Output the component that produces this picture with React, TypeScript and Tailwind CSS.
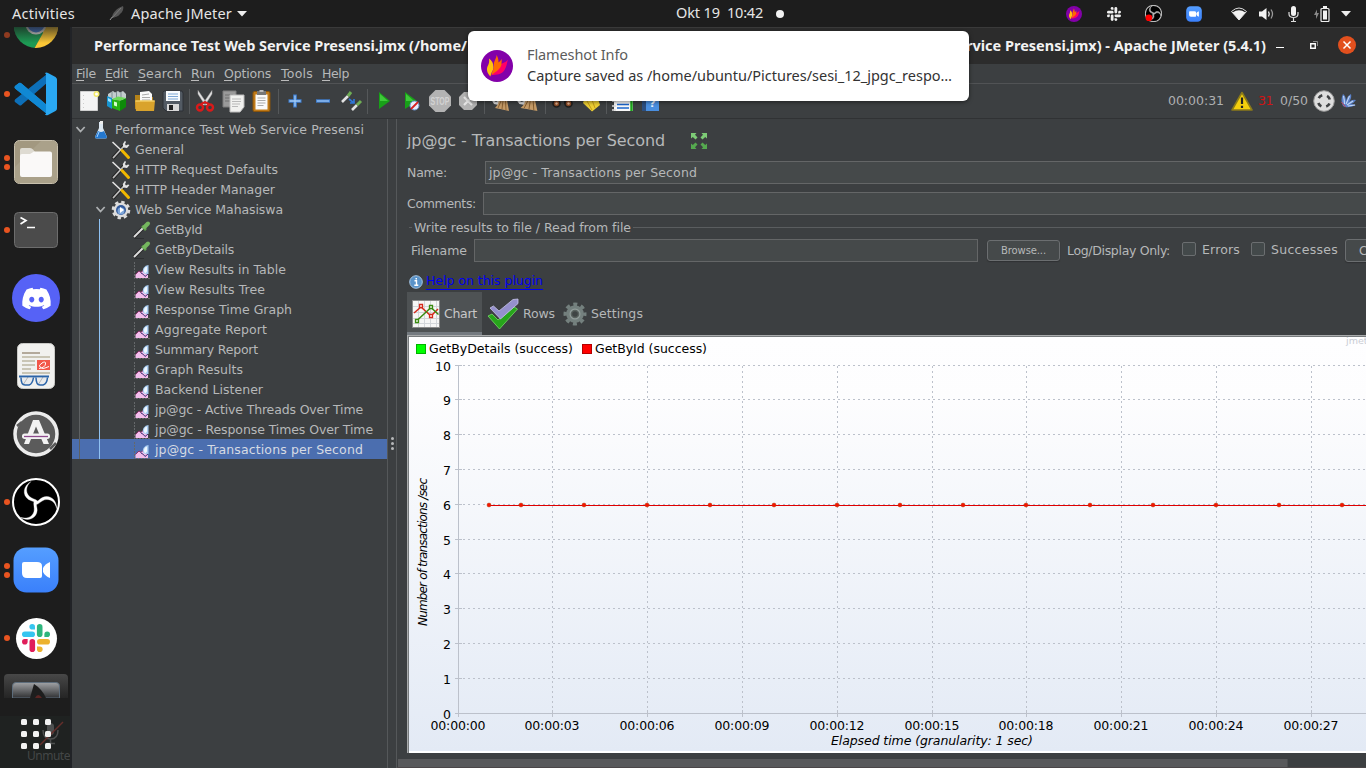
import React, { useLayoutEffect, useRef, useState } from "react";
import { FaDiscord } from "react-icons/fa";

/** Text whose letter spacing is adjusted so that it fills a given width. */
function Fit({ w, children, className = "" }: { w: number; children: string; className?: string }) {
  const ref = useRef<HTMLSpanElement>(null);
  const [ls, setLs] = useState(0);
  useLayoutEffect(() => {
    if (ref.current) setLs((w - ref.current.getBoundingClientRect().width) / children.length);
  }, [w, children]);
  return (
    <span ref={ref} className={"inline-block shrink-0 self-auto whitespace-pre " + className} style={{ letterSpacing: ls }}>
      {children}
    </span>
  );
}

const UI = "font-['Noto_Sans',sans-serif]";

/* ---------- shared glyphs ---------- */

const Flame = ({ size }: { size: number }) => (
  <svg width={size} height={size} viewBox="0 0 32 32" className="shrink-0">
    <circle cx="16" cy="16" r="16" fill="#8300a9" />
    <path d="M11 25C15 25 21 24.500 23.500 20 26 16 25.500 14 27 9.500 24 13.500 21 12.500 19 15 16 18 13 19 11 25z" fill="#ff0066" />
    <path d="M10.500 25.500C13 22 20 20 20.500 14c0-2 .5-3 0-5-1 2-2 2.500-3 3.500C17.500 9 17 7.500 15.500 5c0 4-3 6-2.500 10 .3 4-2 6-2.500 10.500z" fill="#ff6a00" />
    <path d="M9.500 26.500C6 23 5 19 7 15.500c1-2 1.500-4 1-7 3 2 4.500 5 4.500 8.500C12.500 21 10 22 9.500 26.500z" fill="#ffc20e" />
  </svg>
);

const Obs = ({ size, rec }: { size: number; rec?: boolean }) => (
  <svg width={size} height={size} viewBox="0 0 48 48" className="shrink-0">
    <circle cx="24" cy="24" r="23" fill="#000" stroke={rec ? "#bbb" : "#fff"} strokeWidth={rec ? 3 : 2} />
    {[0, 120, 240].map((a) => (
      <path
        key={a}
        transform={`rotate(${a} 24 24.5)`}
        d="M19 3.500C11 8 10 17 16.500 21.500c3 1.800 5.500 1.500 7.500 4l1.500-2.500c-2-2-5-2-8-4.500C13 14 14 8 19 3.500z"
        fill={rec ? "#bbb" : "#fff"}
        stroke={rec ? "#bbb" : "#fff"}
        strokeWidth={rec ? 1.5 : 0.3}
      />
    ))}
    {rec && <circle cx="11" cy="36" r="9.500" fill="#f00" />}
  </svg>
);

const ZoomApp = ({ size }: { size: number }) => (
  <svg width={size} height={size} viewBox="0 0 46 46" className="shrink-0">
    <defs>
      <linearGradient id="zm" x1="0" y1="0" x2="0" y2="1">
        <stop offset="0" stopColor="#559eff" />
        <stop offset="1" stopColor="#3a80fb" />
      </linearGradient>
    </defs>
    <rect x=".5" y=".5" width="45" height="45" rx="13" fill="url(#zm)" />
    <path d="M9 17q0-2 2-2h13q5 0 5 4v10q0 2-2 2H14q-5 0-5-5z" fill="#fff" />
    <path d="M30 21q2-4 7-6v16q-5-2-7-6z" fill="#fff" />
  </svg>
);

const slackParts = [0, 90, 180, 270];
const Slack = ({ size, colors }: { size: number; colors: string[] }) => (
  <svg width={size} height={size} viewBox="0 0 28 28" className="shrink-0">
    {slackParts.map((a, i) => (
      <g key={a} transform={`rotate(${a} 14 14)`} fill={colors[i]}>
        <rect x="0" y="7.500" width="13" height="5.600" rx="2.800" />
        <path d="M13 5.600V2.800a2.800 2.800 0 1 0-2.800 2.800z" />
      </g>
    ))}
  </svg>
);

/* ---------- top bar ---------- */

function TopBar() {
  return (
    <header className={"flex h-[27px] shrink-0 items-center bg-[#1d1d1d] text-[14.500px] leading-[27px] text-[#e6e6e6] " + UI}>
      <div className="flex w-[676px] items-center pl-3">
        <Fit w={63}>Activities</Fit>
        <svg width="16" height="16" viewBox="0 0 16 16" className="ml-[34px]">
          <path d="M1 14 4 10" stroke="#999" />
          <path d="M3 12C3 7 8 2 14 0c1 2 0 6-3 8-2 3-5 3-8 4z" fill="#555" />
          <path d="M3 12 12 2" stroke="#8a8a8a" strokeWidth=".7" />
        </svg>
        <Fit w={101} className="ml-[6px]">Apache JMeter</Fit>
        <svg width="10" height="6" className="ml-[5px]"><path d="M0 0h10L5 5.500z" fill="#eee" /></svg>
      </div>
      <Fit w={44} className="-mt-[2px]">Okt 19</Fit>
      <Fit w={36} className="-mt-[2px] ml-[7px]">10:42</Fit>
      <i className="ml-[13px] size-[8px] rounded-full bg-[#f2f2f2]" />
      <div className="ml-auto flex items-center pr-[15px]">
        <Flame size={16} />
        <span className="ml-[25px] flex"><Slack size={14} colors={["#eee", "#eee", "#eee", "#eee"]} /></span>
        <span className="ml-[24px] flex"><Obs size={17} rec /></span>
        <span className="ml-[24px] flex"><ZoomApp size={16} /></span>
        <svg width="16" height="14" viewBox="0 0 16 14" className="ml-[29px]">
          <path d="M8 13 .5 4.500Q8-2.500 15.500 4.500z" fill="none" stroke="#ddd" strokeWidth="1" />
          <path d="M8 13 1.500 5.500Q8 1 14.500 5.500z" fill="#f2f2f2" />
        </svg>
        <svg width="15" height="14" viewBox="0 0 15 14" className="ml-[12px]">
          <path d="M0 4.500h3L7.500 1v12L3 9.500H0z" fill="#f2f2f2" />
          <path d="M9.500 4.500q1.500 2.500 0 5" stroke="#f2f2f2" strokeWidth="1.300" fill="none" />
          <path d="M12 2.500q3 4.500 0 9" stroke="#999" strokeWidth="1.300" fill="none" />
        </svg>
        <svg width="11" height="16" viewBox="0 0 11 16" className="ml-[14px]">
          <rect x="3" y="0" width="5" height="10" rx="2.500" fill="#f2f2f2" />
          <path d="M1 6v2q0 3.500 4.500 3.500T10 8V6M5.500 12v3M3 15.500h5" stroke="#ddd" strokeWidth="1.200" fill="none" />
        </svg>
        <svg width="16" height="16" viewBox="0 0 16 16" className="ml-[15px]">
          <path d="M3 3.500 0 9h2v4l3-6H3z" fill="#888" />
          <rect x="7" y="2.500" width="8" height="13" rx="1" fill="none" stroke="#eee" strokeWidth="1.200" />
          <path d="M9 0h4v2H9zM9 4.500h4v9H9z" fill="#f2f2f2" />
        </svg>
        <svg width="10" height="6" className="ml-[11px]"><path d="M0 0h10L5 5.500z" fill="#eee" /></svg>
      </div>
    </header>
  );
}

/* ---------- dock ---------- */

function DockItem({ dots = 0, children }: { dots?: number; children: React.ReactNode }) {
  return (
    <div className="flex h-[68px] shrink-0 items-center">
      <div className="ml-[4px] flex w-[6px] flex-col gap-[3px]">
        {Array.from({ length: dots }, (_, i) => (
          <i key={i} className="size-[6px] rounded-full bg-[#e95420]" />
        ))}
      </div>
      <div className="flex w-[52px] justify-center">{children}</div>
    </div>
  );
}

function Dock() {
  return (
    <nav className="flex w-[72px] shrink-0 flex-col overflow-hidden border-r-2 border-[#212327] bg-[#1d1d1d]">
      <div className="flex h-[33px] shrink-0 items-start">
        <i className="ml-[4px] mt-[5px] size-[6px] rounded-full bg-[#8f3b20]" />
        <svg width="44" height="22" viewBox="0 26 44 22" className="ml-[4px]">
          <defs>
            <linearGradient id="fade" x1="0" y1="0" x2="0" y2="1">
              <stop offset="0" stopColor="#1d1d1d" stopOpacity=".7" />
              <stop offset="1" stopColor="#1d1d1d" stopOpacity="0" />
            </linearGradient>
            <clipPath id="cc"><circle cx="22" cy="25" r="22" /></clipPath>
          </defs>
          <g clipPath="url(#cc)">
            <path d="M0 20h24l8 8-12 20H0z" fill="#1d9a54" />
            <path d="M29 24h15v24H20l9-16z" fill="#fbc736" />
            <circle cx="22" cy="23" r="10.500" fill="#e6e6e6" />
            <circle cx="22" cy="23" r="8.500" fill="#4a7fd8" />
            <rect x="0" y="26" width="44" height="16" fill="url(#fade)" />
          </g>
        </svg>
      </div>
      <DockItem dots={1}>
        <svg width="44" height="44" viewBox="0 0 44 44">
          <path d="M1 14 5 11q1.500-.500 2.500.500L34 34l-1 8L1 16.500q-1-1.500 0-2.500z" fill="#1088d4" />
          <path d="M1 30 5 33q1.500 1 2.500 0L34 10l-1-8L1 27.500q-1 1.500 0 2.500z" fill="#0d6fb8" />
          <path d="M1 14 5 11q1.500-.500 2.500.500L34 34l-1 8L1 16.500q-1-1.500 0-2.500z" fill="#1088d4" />
          <path d="M31 1q1.500-1 3 0l7.500 4q1.500 1 1.500 2.500v29q0 1.500-1.500 2.500L34 43q-2 .8-3-.5l1-1V2.500z" fill="#2aa8f2" />
        </svg>
      </DockItem>
      <DockItem dots={2}>
        <svg width="44" height="44" viewBox="0 0 44 44">
          <rect x=".5" y=".5" width="43" height="43" rx="5" fill="#a29880" stroke="#c8c0ad" />
          <path d="M1 27 27 1h12q4 0 4 4v34q0 4-4 4H5q-4 0-4-4z" fill="#aaa18a" />
          <path d="M6 12V10q0-2 2-2h8q2 0 3 1.500l2 2.500h16v10H6z" fill="#dedbd2" />
          <path d="M6 16q0-2 2-2h8l4-2.500h16q2 0 2 2V35q0 2-2 2H8q-2 0-2-2z" fill="#faf9f8" />
        </svg>
      </DockItem>
      <DockItem dots={1}>
        <svg width="44" height="36" viewBox="0 0 44 36">
          <rect x=".5" y=".5" width="43" height="35" rx="4" fill="#4b4b4b" stroke="#6d6d6d" />
          <path d="M6.500 5.500 12 8.500 6.500 12M13 15.500h8" stroke="#fff" strokeWidth="1.700" fill="none" />
        </svg>
      </DockItem>
      <DockItem>
        <div className="flex size-12 shrink-0 items-center justify-center rounded-full bg-[#5662f6] text-white">
          <FaDiscord size={31} />
        </div>
      </DockItem>
      <DockItem>
        <svg width="38" height="46" viewBox="0 0 38 46">
          <rect x=".5" y=".5" width="37" height="45" rx="5" fill="#f1f1ef" stroke="#c9c9c6" />
          <path d="M5 10h18" stroke="#b3a99b" strokeWidth="2" />
          <path d="M5 14h28M5 18h13M5 22h13M5 26h9M5 30h28" stroke="#c9c5b5" strokeWidth="2" />
          <rect x="20" y="17" width="13" height="10" fill="#f25749" />
          <path d="M22 25.500q6-1 6.500-4.500T25 20t-2 4 3 1.500 6-2" stroke="#fff" fill="none" />
          <path d="M6 42 11 34M21 42l5-8" stroke="#888" />
          <path d="M2 33.500h30" stroke="#2b64a8" strokeWidth="2" />
          <path d="M4 34.500q0 7.500 4 7.500h4q3.500-1 4.500-7.500M19 34.500q0 7.500 4 7.500h3q4-1 4.500-7.500" fill="#dfe4ea" fillOpacity=".5" stroke="#2b64a8" strokeWidth="1.500" />
        </svg>
      </DockItem>
      <DockItem>
        <svg width="46" height="46" viewBox="0 0 46 46">
          <circle cx="23" cy="23" r="21" fill="#5b5b5b" stroke="#ececec" strokeWidth="3.500" />
          <path d="m4 15 5-4M37 38l6-6" stroke="#5b5b5b" strokeWidth="2.500" />
          <path d="M20 9h6l10 24h-5.500L23 15.500 16 33h-5z" fill="#f2f2f2" />
          <rect x="9" y="22.500" width="28" height="5.500" rx="2.700" fill="#f2f2f2" />
          <path d="M11 25.500h24" stroke="#8d4a8c" strokeWidth="1.300" />
        </svg>
      </DockItem>
      <DockItem dots={1}><Obs size={48} /></DockItem>
      <DockItem dots={2}><ZoomApp size={46} /></DockItem>
      <DockItem dots={1}>
        <div className="flex size-[41px] shrink-0 items-center justify-center rounded-full bg-white">
          <Slack size={28} colors={["#36c5f0", "#2eb67d", "#ecb22e", "#e01e5a"]} />
        </div>
      </DockItem>
      <div className="ml-[4px] mt-[2px] flex h-[24px] w-[64px] shrink-0 items-end justify-center rounded-t bg-linear-to-b from-[#484848] to-[#252525]">
        <svg width="48" height="16" viewBox="0 0 48 16">
          <defs>
            <linearGradient id="jm" x1="0" y1="0" x2="0" y2="1">
              <stop offset="0" stopColor="#a0a2a5" />
              <stop offset="1" stopColor="#303133" />
            </linearGradient>
          </defs>
          <path d="M.5 16V4q0-3.500 3.500-3.500h40q3.500 0 3.500 3.500v12z" fill="url(#jm)" stroke="#5d6d7c" />
          <path d="M18 16 22 2q8 5 12 14z" fill="#1d1d1d" />
          <path d="M23 16q3-6 7 0z" fill="#5a2523" />
        </svg>
      </div>
      <div className="mt-[18px] flex h-[52px] flex-col items-start bg-[#1f2221]">
        <svg width="62" height="35" viewBox="0 0 62 35" className="ml-[8px] shrink-0">
          <rect x="39" y="7" width="7" height="12" rx="3.500" fill="#4d4f4f" />
          <path d="M35 14q0 9 7.500 9T50 14M42.500 23v4M39 27.500h8" stroke="#4d4f4f" strokeWidth="1.500" fill="none" />
          <path d="m32 29 23-23" stroke="#652e2b" strokeWidth="1.400" />
          {[13, 25, 37].map((x) => [3, 15, 27].map((y) => (
            <rect key={x + "-" + y} x={x} y={y} width="6" height="6" rx="1.500" fill="#f2f2f2" />
          )))}
        </svg>
        <Fit w={43} className={"-mt-[2px] ml-[27px] text-[12px] leading-[14px] text-[#444747] " + UI}>Unmute</Fit>
      </div>
    </nav>
  );
}

/* ---------- toolbar ---------- */

const Slot = ({ children }: { children: React.ReactNode }) => (
  <svg width="28" height="28" viewBox="0 0 28 28" className="shrink-0">{children}</svg>
);
const Sep = ({ className }: { className: string }) => (
  <div className={"flex shrink-0 justify-center " + className}><i className="h-[25px] w-px bg-[#55585a]" /></div>
);
const Broom = () => (
  <>
    <path d="m4 12 5 3 5-3-2 6-5-1z" fill="#d8d8d8" />
    <path d="M12 12l8 1 2 11-9-2-5-1q4-4 4-9z" fill="#c49a66" />
    <path d="m14 14-3 7M16 14l-1 8M18.500 14l.5 9" stroke="#7c5325" strokeWidth=".8" />
  </>
);

function Toolbar() {
  return (
    <div className="flex h-[35px] shrink-0 items-center border-b border-[#303234] pl-[3px]">
      <Slot>
        <path d="M5.500 4.500h17v19h-17z" fill="#f4f4f4" stroke="#cfcfcf" />
        <path d="M8.500 8v13" stroke="#ccc" strokeDasharray="1 3" />
        <circle cx="21.500" cy="7" r="3" fill="#f3ea6a" /><circle cx="21.500" cy="7" r="1.500" fill="#fff" />
      </Slot>
      <Slot>
        <path d="m5 7 5-3 2 1.500L15 4l2 1.500L20 4l3 3v6H5z" fill="#c3cccd" />
        <path d="M9 5v6M13.500 5v6M18 5v6" stroke="#7f8f91" />
        <path d="m4 9 5 2v11l-5-3z" fill="#1794cf" /><path d="m5 11 3 1.500v3L5 14z" fill="#9ee1ff" />
        <path d="m9 12 8 2v10l-8-3z" fill="#27b315" /><path d="m17 14 6-3v9l-6 4z" fill="#0d8a09" />
        <path d="m9 12 6-2.500 8 1.500-6 3z" fill="#6ddb58" /><path d="m11 14.500 3 1v4l-3-1z" fill="#d5ffd0" />
      </Slot>
      <Slot>
        <path d="M4 14V8h5l1 2h12v12H4z" fill="#b48218" />
        <path d="m9 5 9-1 3 3v10H9z" fill="#fafafa" /><path d="m11 8 7-1M11 10.500h8M11 13h8" stroke="#aaa" />
        <path d="M4 13.500h20L23 24H5z" fill="#d9a32c" /><path d="M4.500 14h19" stroke="#ffe27f" />
      </Slot>
      <Slot>
        <path d="M5 4h18l1 2v18H7l-3-3V5z" fill="#525a63" stroke="#2c3036" />
        <path d="M7 4h14v10H7z" fill="#f7fafc" /><path d="M9 7h10M9 9.500h10M9 12h10" stroke="#7ca7d6" />
        <path d="M8 17h12v7H8z" fill="#d8d8d8" /><path d="M10 18h4v5h-4z" fill="#222" />
      </Slot>
      <Sep className="w-[4px]" />
      <Slot>
        <path d="M7 3.500 17 18l-3 0L7 7zM21 3.500 11 18l3 0L21 7z" fill="#e2e2e2" stroke="#aaa" strokeWidth=".5" />
        <circle cx="9" cy="20.500" r="3" fill="none" stroke="#d91a1a" strokeWidth="2.400" />
        <circle cx="19" cy="20.500" r="3" fill="none" stroke="#d91a1a" strokeWidth="2.400" />
        <path d="m10 17 4-2 4 2" stroke="#d91a1a" strokeWidth="2" fill="none" />
      </Slot>
      <Slot>
        <path d="M4 4h13v16H4z" fill="#9a9a9a" stroke="#7d7d7d" /><path d="M6 8h8M6 11h5M6 14h5" stroke="#707070" />
        <path d="M11 8h14v12l-4 5H11z" fill="#f1f1ef" stroke="#bbb" /><path d="M13 12h9M13 14.500h9M13 17h8M13 19.500h6" stroke="#b9b9b9" />
      </Slot>
      <Slot>
        <rect x="6" y="4.500" width="17" height="20" rx="1.500" fill="#c07a18" stroke="#8a540b" />
        <path d="M8.500 7.500h12v15h-12z" fill="#fafafa" /><path d="M10.500 11h8M10.500 13.500h8M10.500 16h8M10.500 18.500h6" stroke="#aaa" />
        <path d="M10 4h9v4h-9z" fill="#777" /><path d="M12.500 3h4v2h-4z" fill="#bbb" />
      </Slot>
      <Sep className="w-[6px]" />
      <Slot><path d="M14 7.500v13M7.500 14h13" stroke="#3f7fd2" strokeWidth="3.600" /><path d="M14 8.500v11M8.500 14h11" stroke="#a3ccf6" strokeWidth="1.300" /></Slot>
      <Slot><path d="M7 14h14" stroke="#3f7fd2" strokeWidth="3.400" /><path d="M8 14h12" stroke="#a3ccf6" strokeWidth="1.200" /></Slot>
      <Slot>
        <path d="m5 15 6-6M15 23l5-5" stroke="#e2e2e2" strokeWidth="2.600" />
        <path d="m11 9 3-4M20 18l4-4" stroke="#6fae55" strokeWidth="3" />
        <path d="m12 12 5 4m0-4v4h-4" stroke="#2f76d8" strokeWidth="1.700" fill="none" />
      </Slot>
      <Sep className="w-[5px]" />
      <Slot><path d="m9 5 11 9L9 22z" fill="#18a018" /><path d="m10 7 8 7h-8z" fill="#3fc93a" /></Slot>
      <Slot>
        <path d="M7 5 19 14 7 22z" fill="#18a018" /><path d="m8 7 8 7H8z" fill="#3fc93a" />
        <circle cx="16.500" cy="18.500" r="4.500" fill="#e8eefb" stroke="#6b94d1" /><path d="m13 22 7-7" stroke="#d62222" strokeWidth="1.800" />
      </Slot>
      <Slot>
        <path d="M9.500 3h9L25 9.500v9L18.500 25h-9L3 18.500v-9z" fill="#b3b3b3" />
        <text x="14" y="17.500" textAnchor="middle" fontSize="10" fontWeight="bold" fill="#d2d2d2" fontFamily="Liberation Sans, sans-serif" textLength="19" lengthAdjust="spacingAndGlyphs">STOP</text>
      </Slot>
      <Slot>
        <path d="M10 5h8l5 5v8l-5 5h-8l-5-5v-8z" fill="#b3b3b3" />
        <path d="m10 10 8 8M18 10l-8 8" stroke="#e4e4e4" strokeWidth="2.200" />
      </Slot>
      <Sep className="w-[5px]" />
      <Slot><Broom /></Slot>
      <Slot><g transform="translate(-4 0) scale(1.2 1)"><Broom /></g></Slot>
      <Sep className="w-[5px]" />
      <Slot>
        <path d="M6 8h6v9H6zM16 8h6v9h-6z" fill="#232323" />
        <circle cx="8.500" cy="16.500" r="3.500" fill="#8a4a26" stroke="#1e1e1e" strokeWidth="1.600" />
        <circle cx="20.500" cy="16.500" r="3.500" fill="#8a4a26" stroke="#1e1e1e" strokeWidth="1.600" />
        <circle cx="8.500" cy="16.500" r="1.200" fill="#e0b090" /><circle cx="20.500" cy="16.500" r="1.200" fill="#e0b090" />
      </Slot>
      <Slot><path d="M9 10 22 12l2 6-8 6.500L7 16z" fill="#edcf33" /><path d="m11 14 5 9M16 13l3 8" stroke="#b78c13" strokeWidth=".8" /></Slot>
      <Sep className="w-[5px]" />
      <Slot>
        <path d="M5 6h19v18H5z" fill="#f8f8f8" /><path d="M22.500 6v18" stroke="#1ca51a" strokeWidth="2.500" />
        <path d="M8 12h12M8 17.500h12M8 21h12" stroke="#1b65cc" strokeWidth="1.700" /><path d="M3 14h4M3 19h4M3 23h4" stroke="#ddd" strokeWidth="1.500" />
      </Slot>
      <Slot>
        <path d="M5 6h4v18H5z" fill="#2c4f80" /><path d="M9 6h13v18H9z" fill="#4a8fe0" />
        <text x="15.500" y="20" textAnchor="middle" fontSize="11" fontWeight="bold" fill="#e6f1ff" fontFamily="DejaVu Sans, sans-serif">?</text>
      </Slot>
      <div className="ml-auto flex shrink-0 items-center pr-[8px]">
        <Fit w={56} className="text-[#aeb0b1]">00:00:31</Fit>
        <svg width="22" height="20" viewBox="0 0 22 20" className="ml-[7px]">
          <path d="M11 1.500 21 19H1z" fill="#f4cf0d" stroke="#8a7a1a" strokeWidth="1.600" strokeLinejoin="round" />
          <path d="M11 6.500v6.500M11 14.800v2.200" stroke="#222" strokeWidth="2.200" />
        </svg>
        <Fit w={15} className="ml-[5px] text-[#d01414]">31</Fit>
        <Fit w={28} className="ml-[7px] text-[#aeb0b1]">0/50</Fit>
        <svg width="22" height="22" viewBox="0 0 22 22" className="ml-[5px]">
          <circle cx="11" cy="11" r="10.300" fill="#dedede" stroke="#9a9a9a" />
          <circle cx="11" cy="11" r="6" fill="none" stroke="#3f4143" strokeWidth="2.600" strokeDasharray="4.400 5.025" strokeDashoffset="-2.500" />
        </svg>
        <svg width="18" height="16" viewBox="0 0 18 16" className="ml-[5px]">
          <path d="M3 13Q0 7 3 1q3 2 3 7 1-5 5-7 1 4-2 8 3-3 7-2-2 3-5 4 2 0 5 1-6 3-11 2z" fill="#5b82ca" />
          <path d="M3.500 3q1 4 1 8M9.500 3 6 11M13 8l-6 4M15 12l-7 1" stroke="#c4d8f4" strokeWidth="1.100" fill="none" />
          <path d="m1.500 9 4 5" stroke="#c1435a" />
        </svg>
      </div>
    </div>
  );
}

/* ---------- test plan tree ---------- */

type Kind = "flask" | "tools" | "gear" | "pipette" | "listener";
const rows: [number, Kind, string, number][] = [
  [0, "flask", "Performance Test Web Service Presensi", 249],
  [1, "tools", "General", 49],
  [1, "tools", "HTTP Request Defaults", 143],
  [1, "tools", "HTTP Header Manager", 140],
  [1, "gear", "Web Service Mahasiswa", 148],
  [2, "pipette", "GetById", 47],
  [2, "pipette", "GetByDetails", 79],
  [2, "listener", "View Results in Table", 131],
  [2, "listener", "View Results Tree", 110],
  [2, "listener", "Response Time Graph", 137],
  [2, "listener", "Aggregate Report", 112],
  [2, "listener", "Summary Report", 103],
  [2, "listener", "Graph Results", 88],
  [2, "listener", "Backend Listener", 108],
  [2, "listener", "jp@gc - Active Threads Over Time", 208],
  [2, "listener", "jp@gc - Response Times Over Time", 218],
  [2, "listener", "jp@gc - Transactions per Second", 208],
];

function TreeIcon({ kind }: { kind: Kind }) {
  return (
    <svg width="20" height="20" viewBox="0 0 20 20" className="shrink-0">
      {kind === "flask" && (
        <>
          <path d="M8 2h4v6l4 9q0 1.500-2 1.500H6q-2 0-2-1.500l4-9z" fill="#dbe7f1" />
          <path d="m7 11-3 6q0 1.500 2 1.500h8q2 0 2-1.500l-3-6q-3 2-6 0z" fill="#2478cf" />
          <path d="m8 12-2 5" stroke="#a8d4ff" /><path d="M9 1h3v3H9z" fill="#eee" />
        </>
      )}
      {kind === "tools" && (
        <>
          <path d="m2.500 17.500 10.500-11.500" stroke="#222" strokeWidth="3.600" strokeLinecap="round" />
          <path d="m2.500 17.500 10.500-11.500" stroke="#bcbcbc" strokeWidth="1.800" strokeLinecap="round" />
          <path d="M14 .8 11.800 4l.4 3.500 3.800.500L18.500 5 17 4.500l-2 1-1-1.500 1-2z" fill="#e2e2e2" />
          <path d="m1.500 2 9 8.500" stroke="#e6e6e6" strokeWidth="1.500" />
          <path d="m11 10.500 6.500 7" stroke="#f0b800" strokeWidth="3" strokeLinecap="round" />
        </>
      )}
      {kind === "gear" && (
        <>
          <circle cx="10" cy="10" r="7.800" fill="none" stroke="#dcdcdc" strokeWidth="3" strokeDasharray="3.300 2.826" />
          <circle cx="10" cy="10" r="7.300" fill="#dcdcdc" />
          <circle cx="10" cy="10" r="5" fill="#31599a" /><circle cx="10" cy="11" r="3.500" fill="#7ea6d9" />
          <path d="m9 7 4 3-4 3z" fill="#fff" />
        </>
      )}
      {kind === "pipette" && (
        <>
          <path d="M2 18.500h10" stroke="#2e3032" /><path d="m2 17 9-9" stroke="#222" strokeWidth="3.600" />
          <path d="m2 17 9.500-9.500" stroke="#dcdcdc" strokeWidth="2" />
          <path d="m10 6 4 4" stroke="#5f9d4b" strokeWidth="2.600" />
          <path d="m12.500 7 3.500-3.500" stroke="#75b75f" strokeWidth="4" strokeLinecap="round" />
        </>
      )}
      {kind === "listener" && (
        <>
          <path d="M2.500 2v16.500H18" fill="none" stroke="#65686a" strokeDasharray="2 1" />
          <path d="M3.500 18v-3.500L7 11l2 1.500 2-2 5 4V18z" fill="#f3bdec" />
          <path d="m3.500 14.500 3.500-3.500 2 1.500 2-2" stroke="#8e3470" fill="none" />
          <path d="M16.500 5v9H13q-3.500-2-1.500-6 2-3 5-3z" fill="#aacdf2" />
          <path d="M15 6.500v5l-2 2q-2-3 0-6z" fill="#f0f8ff" />
          <path d="m9 13 2.500 1.500 1.500 2 3-2.500" stroke="#3a2f75" fill="none" />
        </>
      )}
    </svg>
  );
}

const indentClass = ["pl-[4px]", "pl-[24px]", "pl-[60px]"];

function Tree() {
  return (
    <aside className="relative flex w-[316px] shrink-0 flex-col border-r border-[#55585a]">
      {rows.map(([lvl, kind, label, w], i) => (
        <div key={label} className={"flex h-5 shrink-0 items-center pt-[2px] " + indentClass[lvl] + (i === 16 ? " bg-[#4b6eaf] text-[#d6dbe4]" : "")}>
          {lvl < 2 && (
            <svg width="15" height="10" viewBox="0 0 15 10" className="shrink-0">
              {(lvl === 0 || kind === "gear") && <path d="M.5 2 4.500 6.500 8.700 2" stroke="#adb0b2" strokeWidth="1.800" fill="none" />}
            </svg>
          )}
          <TreeIcon kind={kind} />
          <Fit w={w} className={lvl < 2 ? "ml-[4px]" : "ml-[3px]"}>{label}</Fit>
        </div>
      ))}
      <i className="absolute left-[7px] top-5 h-[320px] w-px bg-[#5e6163]" />
      <i className="absolute left-[27px] top-[100px] h-[240px] w-px bg-[#8fc1f2]" />
    </aside>
  );
}

/* ---------- chart ---------- */

const gx = [552, 647, 742, 837, 932, 1026, 1121, 1216, 1311];
const gy = [365, 399, 434, 469, 504, 539, 573, 608, 643, 678, 713];
const pts = [489, 521, 584, 647, 710, 774, 837, 900, 963, 1026, 1090, 1153, 1216, 1279, 1342];
const times = ["00", "03", "06", "09", "12", "15", "18", "21", "24", "27"];

function Chart() {
  return (
    <svg width="959" height="418" viewBox="407 335 959 418" className="block shrink-0" fontFamily="DejaVu Sans, sans-serif" fontSize="12.500">
      <defs>
        <linearGradient id="bg" x1="0" y1="0" x2="0" y2="1">
          <stop offset="0" stopColor="#fefeff" />
          <stop offset=".15" stopColor="#fdfdfe" />
          <stop offset="1" stopColor="#e3eaf5" />
        </linearGradient>
      </defs>
      <rect x="407" y="335" width="959" height="418" fill="#a9abac" />
      <rect x="408" y="336" width="958" height="417" fill="#777b7d" />
      <rect x="409" y="337" width="958" height="416" fill="#fff" />
      <rect x="409" y="337" width="958" height="414" fill="url(#bg)" />
      <rect x="416.500" y="344.500" width="9" height="9" fill="#0f0" stroke="#00b300" />
      <text x="429" y="353" textLength="144">GetByDetails (success)</text>
      <rect x="582.500" y="344.500" width="9" height="9" fill="#f00" stroke="#b30000" />
      <text x="595" y="353" textLength="112">GetById (success)</text>
      <text x="1346" y="344" fontSize="9.500" fill="#c9ccd4">jmeter</text>
      <g stroke="#bcc1cb" strokeWidth="1" shapeRendering="crispEdges">
        {gy.slice(0, 10).map((y) => <path key={y} d={`M463 ${y + 0.5}H1366`} strokeDasharray="2 3" />)}
        {gx.map((x) => <path key={x} d={`M${x + 0.5} 366V710`} strokeDasharray="2 3" />)}
        {gy.map((y) => <path key={y} d={`M455 ${y + 0.5}h7`} />)}
        {gx.map((x) => <path key={x} d={`M${x + 0.5} 710v7`} />)}
        <path d="M458.500 365v352M455 713.500h911" />
      </g>
      {gy.map((y, i) => (
        <text key={y} x="451" y={y + 5.500} textAnchor="end">{10 - i}</text>
      ))}
      {[458, ...gx].map((x, i) => (
        <text key={x} x={x - 27.500} y="730" textLength="55">{"00:00:" + times[i]}</text>
      ))}
      <text x="831" y="745" textLength="202" fontStyle="italic">Elapsed time (granularity: 1 sec)</text>
      <text transform="translate(427 626) rotate(-90)" textLength="148" fontStyle="italic" fontSize="12">Number of transactions /sec</text>
      <path d="M489 505.500H1366" stroke="#e00000" shapeRendering="crispEdges" />
      {pts.map((x) => <circle key={x} cx={x} cy="505" r="2" fill="#f51400" stroke="#a33800" strokeWidth=".4" />)}
    </svg>
  );
}

/* ---------- main panel ---------- */

const Field = ({ className = "", children }: { className?: string; children?: React.ReactNode }) => (
  <div className={"flex h-[23px] shrink-0 items-center border border-[#646667] bg-[#45494a] px-[3px] " + className}>{children}</div>
);

function Panel() {
  return (
    <main className="flex w-[970px] shrink-0 flex-col overflow-hidden">
      <div className="flex h-[42px] shrink-0 items-center pl-[10px] pt-[2px]">
        <Fit w={258} className="text-[16px] leading-5">jp@gc - Transactions per Second</Fit>
        <svg width="16" height="16" viewBox="0 0 16 16" className="ml-[26px]">
          {[0, 90, 180, 270].map((a) => (
            <path key={a} transform={`rotate(${a} 8 8)`} d="M0 0h5.500L4 1.800l2.500 2.700-2 2L1.800 4 0 5.500z" fill={a > 90 ? "#55a94f" : "#7dcc76"} />
          ))}
        </svg>
      </div>
      <div className="flex h-[23px] shrink-0 items-center pl-[10px]">
        <div className="w-[78px] shrink-0"><Fit w={40}>Name:</Fit></div>
        <Field className="w-[900px]"><Fit w={208}>jp@gc - Transactions per Second</Fit></Field>
      </div>
      <div className="mt-[8px] flex h-[23px] shrink-0 items-center pl-[10px]">
        <div className="w-[76px] shrink-0"><Fit w={69}>Comments:</Fit></div>
        <Field className="w-[900px]" />
      </div>
      <div className="mt-[4px] flex h-[18px] shrink-0 items-center gap-[2px] pl-[12px]">
        <i className="mb-px h-px w-[3px] bg-[#5a5d5f]" />
        <Fit w={217}>Write results to file / Read from file</Fit>
        <i className="mb-px h-px grow bg-[#5a5d5f]" />
      </div>
      <div className="mt-[2px] flex h-[23px] shrink-0 items-center pl-[14px]">
        <Fit w={56}>Filename</Fit>
        <Field className="ml-[7px] w-[504px]" />
        <div className="ml-[9px] flex h-[21px] w-[73px] shrink-0 items-center justify-center rounded-[3px] border border-[#6b6e70] bg-[#45494a] shadow-[0_1px_1px_#2f3133]">
          <Fit w={45} className="text-[10px]">Browse...</Fit>
        </div>
        <Fit w={103} className="ml-[7px]">Log/Display Only:</Fit>
        <i className="mb-[3px] ml-[12px] size-[14px] shrink-0 rounded-[2px] border border-[#6b6e70] bg-[#43494a]" />
        <Fit w={38} className="mb-[2px] ml-[6px]">Errors</Fit>
        <i className="mb-[3px] ml-[11px] size-[14px] shrink-0 rounded-[2px] border border-[#6b6e70] bg-[#43494a]" />
        <Fit w={67} className="mb-[2px] ml-[6px]">Successes</Fit>
        <div className="ml-[7px] flex h-[23px] w-[90px] shrink-0 items-center rounded-[3px] border border-[#6b6e70] bg-[#45494a] pl-[13px] shadow-[0_1px_1px_#2f3133]">
          <span className="text-[12px]">Configure</span>
        </div>
      </div>
      <div className="flex h-[30px] shrink-0 items-end pl-[12px] pb-[2px]">
        <svg width="14" height="14" viewBox="0 0 14 14" className="mb-[1px]">
          <circle cx="7" cy="7" r="6.300" fill="#5a93c9" stroke="#a6c4e0" />
          <path d="M5.500 5.800H7.500V10M5.300 10.200h4M6.500 3.700h1.500" stroke="#fff" strokeWidth="1.400" fill="none" />
        </svg>
        <div className="ml-[3px] flex h-[16px] border-b border-[#0000f0] leading-[13px] text-[#0000f0]"><Fit w={117}>Help on this plugin</Fit></div>
      </div>
      <div className="flex h-[43px] shrink-0 pl-[10px]">
        <div className="flex h-[43px] w-[75px] shrink-0 items-center border-b-[3px] border-[#747a80] bg-[#4e5254] pl-[5px] pt-[3px] text-[#c8c8c8]">
          <svg width="28" height="28" viewBox="0 0 28 28" className="shrink-0">
            <path d="M.5.500h27v27H.5z" fill="#f6f6f6" stroke="#8a8a8a" />
            <path d="M6.500 1v26M12.500 1v26M18.500 1v26M24.500 1v26M1 6.500h26M1 12.500h26M1 18.500h26M1 23.500h26" stroke="#d3d6da" />
            <path d="m2 13 7-6 10 9 7-7" stroke="#d42b1e" strokeWidth="1.500" fill="none" />
            <path d="m5 20.500 14-13 7.500 7" stroke="#3a8a10" strokeWidth="1.500" fill="none" />
            <path d="M7.500 4.500h3v3h-3zM17.500 14.500h3v3h-3z" fill="#fff" stroke="#d42b1e" strokeWidth="1.300" />
            <path d="M3.500 19.500h3v3h-3zM17.500 5.500h3v3h-3z" fill="#fff" stroke="#3a8a10" strokeWidth="1.300" />
          </svg>
          <Fit w={33} className="ml-[4px]">Chart</Fit>
        </div>
        <div className="flex items-center pl-[5px]">
          <svg width="32" height="32" viewBox="0 0 32 32" className="shrink-0">
            <path d="m1 18 4-2 6 6L27 9l3.500 2-18 20z" fill="#27a51b" stroke="#77d868" strokeWidth=".8" />
            <path d="m3 10 3.500-2 5.500 5L26 1.500 31 1v4.500L13.500 21z" fill="#9590cd" stroke="#c7c4ea" strokeWidth=".8" />
          </svg>
          <Fit w={32} className="ml-[4px]">Rows</Fit>
          <svg width="24" height="24" viewBox="0 0 24 24" className="ml-[8px] shrink-0">
            <circle cx="12" cy="12" r="9.800" fill="none" stroke="#74807e" strokeWidth="3.400" strokeDasharray="4 3.697" strokeDashoffset="2" />
            <circle cx="12" cy="12" r="8.800" fill="#74807e" />
            <circle cx="12" cy="12" r="5.500" fill="#939e9c" /><circle cx="12" cy="12" r="4.300" fill="#59625f" /><circle cx="12" cy="12" r="2.800" fill="#3f4444" />
          </svg>
          <Fit w={52} className="ml-[4px]">Settings</Fit>
        </div>
      </div>
      <div className="flex shrink-0 pl-[10px]"><Chart /></div>
      <div className="mt-[6px] ml-px h-[8px] w-[890px] shrink-0 border-r border-[#4b4d4f] bg-[#58595b]" />
      <div className="h-px shrink-0 bg-[#4a4648]" />
    </main>
  );
}

/* ---------- window ---------- */

const menus: [string, number, string][] = [
  ["File", 20, "w-[29px]"],
  ["Edit", 23, "w-[33px]"],
  ["Search", 44, "w-[53px]"],
  ["Run", 24, "w-[33px]"],
  ["Options", 47, "w-[57px]"],
  ["Tools", 32, "w-[41px]"],
  ["Help", 27, "w-[36px]"],
];

function MenuItem({ label, w, slot }: { label: string; w: number; slot: string }) {
  return (
    <span className={"relative flex shrink-0 " + slot}>
      <Fit w={w}>{label}</Fit>
      <i className="absolute bottom-[2px] left-0 h-px w-[8px] bg-[#bbb]" />
    </span>
  );
}

export default function App() {
  return (
    <div className="relative flex h-[768px] w-[1366px] flex-col overflow-hidden bg-[#3c3f41]">
      <TopBar />
      <div className="flex min-h-0 grow">
        <Dock />
        <div className="flex w-[1294px] shrink-0 flex-col font-['DejaVu_Sans',sans-serif] text-[12.500px] leading-[18px] text-[#b6b8b9]">
          <div className={"flex h-[37px] shrink-0 items-center border-t border-[#3a3a3a] bg-[#2c2c2c] pb-[2px] pl-[22px] text-[14.500px] font-bold text-[#f2f2f2] " + UI}>
            <Fit w={373}>Performance Test Web Service Presensi.jmx (/home/</Fit>
            <Fit w={300} className="ml-[499px]">rvice Presensi.jmx) - Apache JMeter (5.4.1)</Fit>
            <i className="ml-[10px] mt-[5px] h-px w-[8px] bg-white" />
            <svg width="8" height="8" viewBox="0 0 8 8" className="ml-[26px]">
              <path d="M.75 2.750h4.500v4.500H.75z" fill="none" stroke="#fff" strokeWidth="1.400" /><path d="M3 .5h4.500V5" fill="none" stroke="#888" />
            </svg>
            <svg width="18" height="18" viewBox="0 0 18 18" className="ml-[20px]">
              <circle cx="9" cy="9" r="9" fill="#e2501e" /><path d="m5.500 5.500 7 7M12.500 5.500l-7 7" stroke="#fff" strokeWidth="1.500" />
            </svg>
          </div>
          <div className="flex h-[20px] shrink-0 items-center border-b border-[#515355] pl-[4px]">
            {menus.map(([m, w, slot]) => <MenuItem key={m} label={m} w={w} slot={slot} />)}
          </div>
          <Toolbar />
          <div className="flex min-h-0 grow">
            <Tree />
            <div className="flex w-[9px] shrink-0 flex-col items-center gap-[2px] border-r border-[#55585a] pt-[318px]">
              <i className="size-[3px] shrink-0 rounded-full bg-[#b6b8b9]" />
              <i className="size-[3px] shrink-0 rounded-full bg-[#b6b8b9]" />
              <i className="size-[3px] shrink-0 rounded-full bg-[#b6b8b9]" />
            </div>
            <Panel />
          </div>
        </div>
      </div>
      <div className={"absolute left-[468px] top-[31px] flex h-[70px] w-[501px] items-center rounded-[6px] bg-white pb-[2px] pl-[13px] text-[14.500px] shadow-[0_1px_4px_rgba(0,0,0,0.500)] " + UI}>
        <div className="mt-[2px] flex"><Flame size={32} /></div>
        <div className="ml-[14px] flex flex-col items-start leading-[21px]">
          <Fit w={101} className="text-[#5c5c5c]">Flameshot Info</Fit>
          <Fit w={425} className="text-[#333]">Capture saved as /home/ubuntu/Pictures/sesi_12_jpgc_respo…</Fit>
        </div>
      </div>
    </div>
  );
}
